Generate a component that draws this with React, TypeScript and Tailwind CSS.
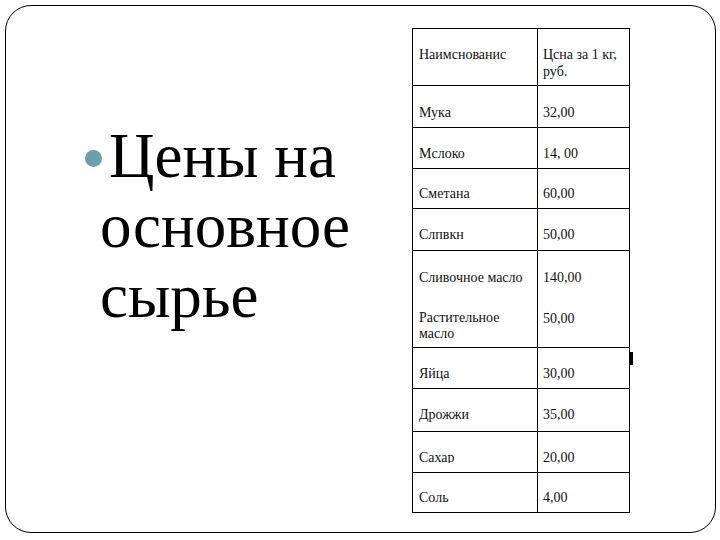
import React from "react";

type Row = { name: React.ReactNode; price: React.ReactNode; h: string; pt: string };

const cellFont = "font-['Liberation_Serif',serif] text-[14px] leading-[17px] text-[#111]";

export default function App() {
  const rows: Row[] = [
    { name: "Мука", price: "32,00", h: "h-[42px]", pt: "pt-[18px]" },
    { name: "Мслоко", price: "14, 00", h: "h-[41px]", pt: "pt-[17px]" },
    { name: "Сметана", price: "60,00", h: "h-[40px]", pt: "pt-[16px]" },
    { name: "Слпвкн", price: "50,00", h: "h-[42px]", pt: "pt-[17px]" },
  ];
  const rows2: Row[] = [
    { name: "Яйца", price: "30,00", h: "h-[41px]", pt: "pt-[17px]" },
    { name: "Дрожжи", price: "35,00", h: "h-[43px]", pt: "pt-[17px]" },
    {
      name: <span className="block h-[14px] overflow-hidden">Сахар</span>,
      price: "20,00",
      h: "h-[41px]",
      pt: "pt-[17px]",
    },
    { name: "Соль", price: "4,00", h: "h-[40px]", pt: "pt-[16px]" },
  ];

  const renderRow = (r: Row, i: number, extra?: React.ReactNode) => (
    <div key={i} className={`relative flex ${r.h} border-b border-black`}>
      <div className={`w-[125px] shrink-0 border-r border-black pl-[6px] ${r.pt} ${cellFont}`}>{r.name}</div>
      <div className={`flex-1 pl-[5px] ${r.pt} ${cellFont}`}>{r.price}</div>
      {extra}
    </div>
  );

  return (
    <div className="w-[720px] h-[540px] bg-white overflow-hidden">
      <div className="ml-[5px] mt-[5px] w-[711px] h-[528px] border border-black rounded-[26px] flex items-start">
        {/* left title */}
        <div className="mt-[115px] ml-[79px] w-[327px] flex items-start">
          <div className="mt-[29px] w-[17px] h-[17px] rounded-full bg-[#6c9fae] shrink-0" />
          <div className="-ml-[2px] indent-[9px] font-['Liberation_Serif',serif] text-[63px] leading-[70px] text-black">
            Цены на
            <br />
            <span className="inline-block -indent-0">основное</span>
            <br />
            сырье
          </div>
        </div>

        {/* table */}
        <div className="mt-[22px] w-[218px] border-l border-r border-t border-black">
          <div className="flex h-[57px] border-b border-black">
            <div className={`w-[125px] shrink-0 border-r border-black pl-[6px] pt-[17px] ${cellFont}`}>Наимснованис</div>
            <div className={`flex-1 pl-[5px] pr-[2px] pt-[17px] ${cellFont}`}>
              Цсна за 1 кг,
              <br />
              руб.
            </div>
          </div>
          {rows.map((r, i) => renderRow(r, i))}
          <div className="flex h-[97px] border-b border-black overflow-hidden">
            <div className={`w-[125px] shrink-0 border-r border-black pl-[6px] pt-[18px] ${cellFont}`}>
              <div className="h-[41px] whitespace-nowrap">Сливочное масло</div>
              <div className="h-[28px] overflow-hidden leading-[16px]">
                Растительное
                <br />
                масло
              </div>
            </div>
            <div className={`flex-1 pl-[5px] pt-[18px] ${cellFont}`}>
              <div className="h-[41px]">140,00</div>
              <div>50,00</div>
            </div>
          </div>
          {rows2.map((r, i) =>
            renderRow(
              r,
              100 + i,
              i === 0 ? <div className="absolute -right-[4px] top-[4px] w-[3px] h-[13px] bg-black" /> : undefined
            )
          )}
        </div>
      </div>
    </div>
  );
}
